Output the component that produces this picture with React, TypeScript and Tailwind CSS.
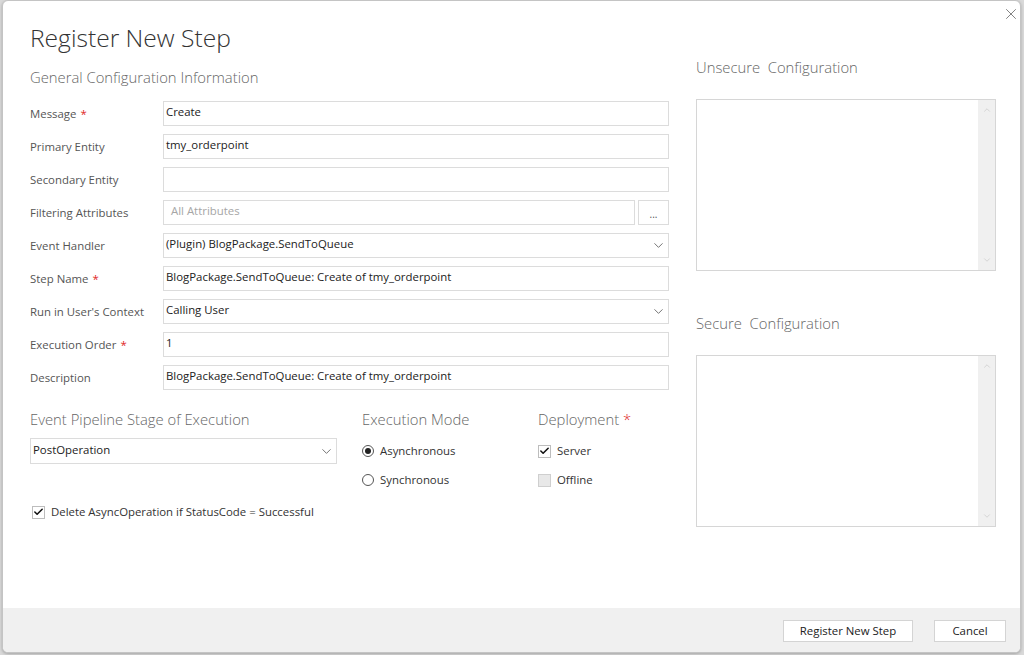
import { Check, ChevronDown, ChevronUp, X } from 'lucide-react';

const font = "font-['Open_Sans','Noto_Sans',sans-serif]";

function Req() {
  return <span className="ml-1 text-[#e0261f]">*</span>;
}

function Field({ label, required, children }: { label: string; required?: boolean; children: React.ReactNode }) {
  return (
    <div className="flex h-[25px] items-center">
      <div className="w-[133px] shrink-0 text-[11.4px] text-[#555]">
        {label}
        {required && <Req />}
      </div>
      <div className="flex h-full flex-1 gap-[3px]">{children}</div>
    </div>
  );
}

function TextBox({ value, placeholder, select }: { value?: string; placeholder?: string; select?: boolean }) {
  return (
    <div className="flex h-full flex-1 items-center border border-[#dcdcdc] bg-white pb-[3px] pl-[2px] pr-[2px] text-[11.4px] text-[#222]">
      <span className={`flex-1 ${placeholder ? 'pl-[5px] text-[#a6a6a6]' : ''}`}>{value ?? placeholder}</span>
      {select && <ChevronDown className="mt-[3px] h-[15px] w-[15px] text-[#555]" strokeWidth={1.3} />}
    </div>
  );
}

function ScrollArea() {
  return (
    <div className="flex h-[172px] border border-[#d6d6d6] bg-white">
      <div className="flex-1" />
      <div className="flex w-[17px] flex-col items-center justify-between bg-[#f0f0f0] py-[5px]">
        <ChevronUp className="h-[10px] w-[10px] text-[#c4c4c4]" strokeWidth={1.5} />
        <ChevronDown className="h-[10px] w-[10px] text-[#c4c4c4]" strokeWidth={1.5} />
      </div>
    </div>
  );
}

function Radio({ label, checked }: { label: string; checked?: boolean }) {
  return (
    <div className="flex h-[16px] items-center gap-[6px] text-[11.4px] text-[#333]">
      <span className="flex h-[12px] w-[12px] items-center justify-center rounded-full border border-[#555] bg-white">
        {checked && <span className="h-[6px] w-[6px] rounded-full bg-[#222]" />}
      </span>
      {label}
    </div>
  );
}

function CheckBox({ label, checked }: { label: string; checked?: boolean }) {
  return (
    <div className="flex h-[16px] items-center gap-[6px] text-[11.4px] text-[#333]">
      <span
        className={`flex h-[13px] w-[13px] items-center justify-center border ${
          checked ? 'border-[#bdbdbd] bg-white' : 'border-[#cfcfcf] bg-[#e8e8e8]'
        }`}
      >
        {checked && <Check className="h-[12px] w-[12px] text-[#111]" strokeWidth={3.4} />}
      </span>
      {label}
    </div>
  );
}

export default function App() {
  return (
    <div className={`h-[655px] w-[1024px] overflow-hidden bg-[#d9d9d9] pl-[2px] ${font}`}>
      <div className="relative flex h-[653px] w-[1019px] flex-col overflow-hidden rounded-[6px] border border-[#c4c4c4] bg-white shadow-[0_1px_3px_rgba(0,0,0,0.25)]">
        <X className="absolute right-0 top-[4px] h-[18px] w-[18px] text-[#808080]" strokeWidth={1.3} />

        <div className="flex flex-1 pl-[27px] pt-[20px]">
          {/* left column */}
          <div className="w-[639px]">
            <h1 className="text-[24.6px] font-light leading-[34px] text-[#333]">Register New Step</h1>
            <h2 className="mt-[12px] text-[14.8px] font-light leading-[20px] text-[#666]">General Configuration Information</h2>

            <div className="mt-[14px] flex flex-col gap-[8px]">
              <Field label="Message" required>
                <TextBox value="Create" />
              </Field>
              <Field label="Primary Entity">
                <TextBox value="tmy_orderpoint" />
              </Field>
              <Field label="Secondary Entity">
                <TextBox value="" />
              </Field>
              <Field label="Filtering Attributes">
                <TextBox placeholder="All Attributes" />
                <div className="flex w-[31px] items-end justify-center border border-[#dcdcdc] bg-white pb-[5px] text-[10px] leading-none text-[#555]">
                  ...
                </div>
              </Field>
              <Field label="Event Handler">
                <TextBox value="(Plugin) BlogPackage.SendToQueue" select />
              </Field>
              <Field label="Step Name" required>
                <TextBox value="BlogPackage.SendToQueue: Create of tmy_orderpoint" />
              </Field>
              <Field label="Run in User's Context">
                <TextBox value="Calling User" select />
              </Field>
              <Field label="Execution Order" required>
                <TextBox value="1" />
              </Field>
              <Field label="Description">
                <TextBox value="BlogPackage.SendToQueue: Create of tmy_orderpoint" />
              </Field>
            </div>

            <div className="mt-[19px] flex">
              <div className="w-[307px]">
                <div className="text-[14.8px] font-light leading-[20px] text-[#666]">Event Pipeline Stage of Execution</div>
                <div className="mt-[9px] h-[26px]">
                  <TextBox value="PostOperation" select />
                </div>
              </div>
              <div className="ml-[25px] w-[176px]">
                <div className="text-[14.8px] font-light leading-[20px] text-[#666]">Execution Mode</div>
                <div className="mt-[14px] flex flex-col gap-[13px]">
                  <Radio label="Asynchronous" checked />
                  <Radio label="Synchronous" />
                </div>
              </div>
              <div>
                <div className="text-[14.8px] font-light leading-[20px] text-[#666]">
                  Deployment
                  <Req />
                </div>
                <div className="mt-[14px] flex flex-col gap-[13px]">
                  <CheckBox label="Server" checked />
                  <CheckBox label="Offline" />
                </div>
              </div>
            </div>

            <div className="mt-[16px] pl-[2px]">
              <CheckBox label="Delete AsyncOperation if StatusCode = Successful" checked />
            </div>
          </div>

          {/* right column */}
          <div className="ml-[27px] w-[300px] pt-[36px]">
            <div className="text-[14.8px] font-light leading-[20px] text-[#666]">Unsecure&nbsp; Configuration</div>
            <div className="mt-[22px]">
              <ScrollArea />
            </div>
            <div className="mt-[42px] text-[14.8px] font-light leading-[20px] text-[#666]">Secure&nbsp; Configuration</div>
            <div className="mt-[22px]">
              <ScrollArea />
            </div>
          </div>
        </div>

        <div className="flex h-[44px] items-center justify-end gap-[21px] bg-[#f0f0f0] pr-[14px] pt-[2px]">
          <button className="h-[22px] w-[130px] border border-[#d4d4d4] bg-white text-[11.4px] text-[#222]">Register New Step</button>
          <button className="h-[22px] w-[72px] border border-[#d4d4d4] bg-white text-[11.4px] text-[#222]">Cancel</button>
        </div>
      </div>
    </div>
  );
}
